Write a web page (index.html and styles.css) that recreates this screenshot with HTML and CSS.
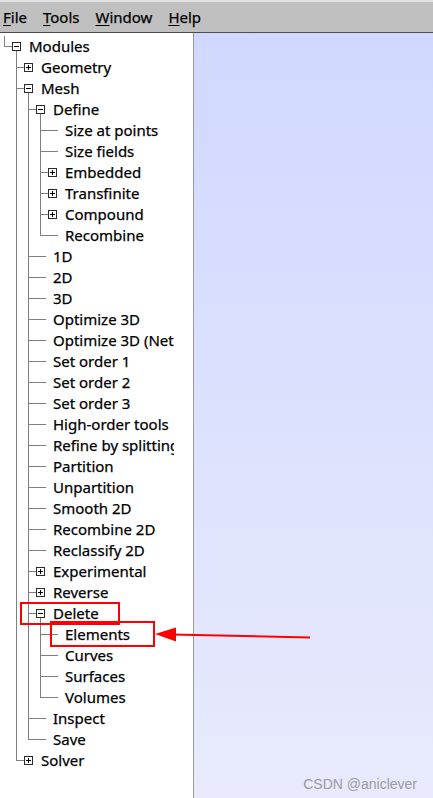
FILE: index.html
```html
<!DOCTYPE html>
<html>
<head>
<meta charset="utf-8">
<link rel="stylesheet" href="styles.css">
</head>
<body>
<div class="app">
  <div class="menubar">
    <span class="menu"><u>F</u>ile</span>
    <span class="menu"><u>T</u>ools</span>
    <span class="menu"><u>W</u>indow</span>
    <span class="menu"><u>H</u>elp</span>
  </div>
  <div class="main">
    <div class="tree-panel">
      <div class="tree">
        <div class="row"><span class="g elbow"></span><span class="ic open"><span class="box minus"></span></span><span class="label">Modules</span></div>
        <div class="row"><span class="g"></span><span class="g tee"></span><span class="ic"><span class="box plus"></span></span><span class="label">Geometry</span></div>
        <div class="row"><span class="g"></span><span class="g tee"></span><span class="ic open"><span class="box minus"></span></span><span class="label">Mesh</span></div>
        <div class="row"><span class="g"></span><span class="g pipe"></span><span class="g tee"></span><span class="ic open"><span class="box minus"></span></span><span class="label">Define</span></div>
        <div class="row"><span class="g"></span><span class="g pipe"></span><span class="g pipe"></span><span class="g tee"></span><span class="ic leaf"></span><span class="label">Size at points</span></div>
        <div class="row"><span class="g"></span><span class="g pipe"></span><span class="g pipe"></span><span class="g tee"></span><span class="ic leaf"></span><span class="label">Size fields</span></div>
        <div class="row"><span class="g"></span><span class="g pipe"></span><span class="g pipe"></span><span class="g tee"></span><span class="ic"><span class="box plus"></span></span><span class="label">Embedded</span></div>
        <div class="row"><span class="g"></span><span class="g pipe"></span><span class="g pipe"></span><span class="g tee"></span><span class="ic"><span class="box plus"></span></span><span class="label">Transfinite</span></div>
        <div class="row"><span class="g"></span><span class="g pipe"></span><span class="g pipe"></span><span class="g tee"></span><span class="ic"><span class="box plus"></span></span><span class="label">Compound</span></div>
        <div class="row"><span class="g"></span><span class="g pipe"></span><span class="g pipe"></span><span class="g elbow"></span><span class="ic leaf"></span><span class="label">Recombine</span></div>
        <div class="row"><span class="g"></span><span class="g pipe"></span><span class="g tee"></span><span class="ic leaf"></span><span class="label">1D</span></div>
        <div class="row"><span class="g"></span><span class="g pipe"></span><span class="g tee"></span><span class="ic leaf"></span><span class="label">2D</span></div>
        <div class="row"><span class="g"></span><span class="g pipe"></span><span class="g tee"></span><span class="ic leaf"></span><span class="label">3D</span></div>
        <div class="row"><span class="g"></span><span class="g pipe"></span><span class="g tee"></span><span class="ic leaf"></span><span class="label">Optimize 3D</span></div>
        <div class="row"><span class="g"></span><span class="g pipe"></span><span class="g tee"></span><span class="ic leaf"></span><span class="label">Optimize 3D (Netgen)</span></div>
        <div class="row"><span class="g"></span><span class="g pipe"></span><span class="g tee"></span><span class="ic leaf"></span><span class="label">Set order 1</span></div>
        <div class="row"><span class="g"></span><span class="g pipe"></span><span class="g tee"></span><span class="ic leaf"></span><span class="label">Set order 2</span></div>
        <div class="row"><span class="g"></span><span class="g pipe"></span><span class="g tee"></span><span class="ic leaf"></span><span class="label">Set order 3</span></div>
        <div class="row"><span class="g"></span><span class="g pipe"></span><span class="g tee"></span><span class="ic leaf"></span><span class="label">High-order tools</span></div>
        <div class="row"><span class="g"></span><span class="g pipe"></span><span class="g tee"></span><span class="ic leaf"></span><span class="label">Refine by splitting</span></div>
        <div class="row"><span class="g"></span><span class="g pipe"></span><span class="g tee"></span><span class="ic leaf"></span><span class="label">Partition</span></div>
        <div class="row"><span class="g"></span><span class="g pipe"></span><span class="g tee"></span><span class="ic leaf"></span><span class="label">Unpartition</span></div>
        <div class="row"><span class="g"></span><span class="g pipe"></span><span class="g tee"></span><span class="ic leaf"></span><span class="label">Smooth 2D</span></div>
        <div class="row"><span class="g"></span><span class="g pipe"></span><span class="g tee"></span><span class="ic leaf"></span><span class="label">Recombine 2D</span></div>
        <div class="row"><span class="g"></span><span class="g pipe"></span><span class="g tee"></span><span class="ic leaf"></span><span class="label">Reclassify 2D</span></div>
        <div class="row"><span class="g"></span><span class="g pipe"></span><span class="g tee"></span><span class="ic"><span class="box plus"></span></span><span class="label">Experimental</span></div>
        <div class="row"><span class="g"></span><span class="g pipe"></span><span class="g tee"></span><span class="ic"><span class="box plus"></span></span><span class="label">Reverse</span></div>
        <div class="row"><span class="g"></span><span class="g pipe"></span><span class="g tee"></span><span class="ic open"><span class="box minus"></span></span><span class="label">Delete</span></div>
        <div class="row"><span class="g"></span><span class="g pipe"></span><span class="g pipe"></span><span class="g tee"></span><span class="ic leaf"></span><span class="label">Elements</span></div>
        <div class="row"><span class="g"></span><span class="g pipe"></span><span class="g pipe"></span><span class="g tee"></span><span class="ic leaf"></span><span class="label">Curves</span></div>
        <div class="row"><span class="g"></span><span class="g pipe"></span><span class="g pipe"></span><span class="g tee"></span><span class="ic leaf"></span><span class="label">Surfaces</span></div>
        <div class="row"><span class="g"></span><span class="g pipe"></span><span class="g pipe"></span><span class="g elbow"></span><span class="ic leaf"></span><span class="label">Volumes</span></div>
        <div class="row"><span class="g"></span><span class="g pipe"></span><span class="g tee"></span><span class="ic leaf"></span><span class="label">Inspect</span></div>
        <div class="row"><span class="g"></span><span class="g pipe"></span><span class="g elbow"></span><span class="ic leaf"></span><span class="label">Save</span></div>
        <div class="row"><span class="g"></span><span class="g elbow"></span><span class="ic"><span class="box plus"></span></span><span class="label">Solver</span></div>
      </div>
    </div>
    <div class="divider"></div>
    <div class="graphics"><span class="watermark">CSDN @aniclever</span></div>
  </div>
  <svg class="annotations" width="433" height="798" viewBox="0 0 433 798">
    <rect x="21" y="603" width="98" height="21" fill="none" stroke="#f00" stroke-width="2"/>
    <rect x="51" y="622" width="103" height="24" fill="none" stroke="#f00" stroke-width="2"/>
    <line x1="172" y1="634.5" x2="310" y2="637.5" stroke="#f00" stroke-width="2"/>
    <polygon points="155,634 176,627.5 176,641.5" fill="#f00"/>
  </svg>
</div>
</body>
</html>
```
FILE: styles.css
```css
html, body {
  margin: 0;
  padding: 0;
}
body {
  width: 433px;
  height: 798px;
  overflow: hidden;
  font-family: "Noto Sans", "DejaVu Sans", sans-serif;
  color: #000;
}
.app {
  position: relative;
  width: 433px;
  height: 798px;
  display: flex;
  flex-direction: column;
}
.menubar {
  flex: 0 0 auto;
  height: 30px;
  box-sizing: content-box;
  border-top: 2px solid #e2e2e2;
  border-bottom: 1px solid #4c4c4c;
  background: #c0c0c0;
  display: flex;
  align-items: center;
  padding-left: 3px;
  gap: 16px;
  font-size: 15px;
  -webkit-text-stroke: 0.25px #000;
}
.menu u {
  text-decoration-thickness: 1px;
  text-underline-offset: 2px;
}
.main {
  flex: 1 1 auto;
  display: flex;
  min-height: 0;
}
.tree-panel {
  flex: 0 0 193px;
  background: #fff;
}
.tree {
  width: 174px;
  overflow: hidden;
  padding-top: 3px;
  font-size: 15px;
  -webkit-text-stroke: 0.25px #000;
}
.row {
  display: flex;
  height: 21px;
  align-items: stretch;
}
.g, .ic {
  flex: 0 0 12px;
}
.pipe {
  background: linear-gradient(#7f7f7f, #7f7f7f) 4px 0 / 1px 100% no-repeat;
}
.tee {
  background:
    linear-gradient(#7f7f7f, #7f7f7f) 4px 0 / 1px 100% no-repeat,
    linear-gradient(#7f7f7f, #7f7f7f) 4px 10px / 8px 1px no-repeat;
}
.elbow {
  background:
    linear-gradient(#7f7f7f, #7f7f7f) 4px 0 / 1px 11px no-repeat,
    linear-gradient(#7f7f7f, #7f7f7f) 4px 10px / 8px 1px no-repeat;
}
.leaf {
  background: linear-gradient(#7f7f7f, #7f7f7f) 0 10px / 10px 1px no-repeat;
}
.ic.open {
  background: linear-gradient(#7f7f7f, #7f7f7f) 4px 10px / 1px 11px no-repeat;
}
.box {
  display: block;
  width: 9px;
  height: 9px;
  box-sizing: border-box;
  border: 1px solid #2a2a2a;
  margin-top: 6px;
}
.box.minus {
  background:
    linear-gradient(#000, #000) 1px 3px / 5px 1px no-repeat,
    #fff;
}
.box.plus {
  background:
    linear-gradient(#000, #000) 1px 3px / 5px 1px no-repeat,
    linear-gradient(#000, #000) 3px 1px / 1px 5px no-repeat,
    #fff;
}
.label {
  margin-left: 5px;
  line-height: 21px;
  white-space: nowrap;
}
.divider {
  flex: 0 0 1px;
  background: #9c9c9c;
}
.graphics {
  flex: 1 1 auto;
  background: linear-gradient(#d0d8ff, #e8eafc);
  display: flex;
  justify-content: flex-end;
  align-items: flex-end;
  padding: 0 16px 6px 0;
}
.watermark {
  font-family: "Liberation Sans", Arial, sans-serif;
  font-size: 14px;
  color: #9a9aa2;
}
.annotations {
  position: absolute;
  left: 0;
  top: 0;
  pointer-events: none;
}
```
